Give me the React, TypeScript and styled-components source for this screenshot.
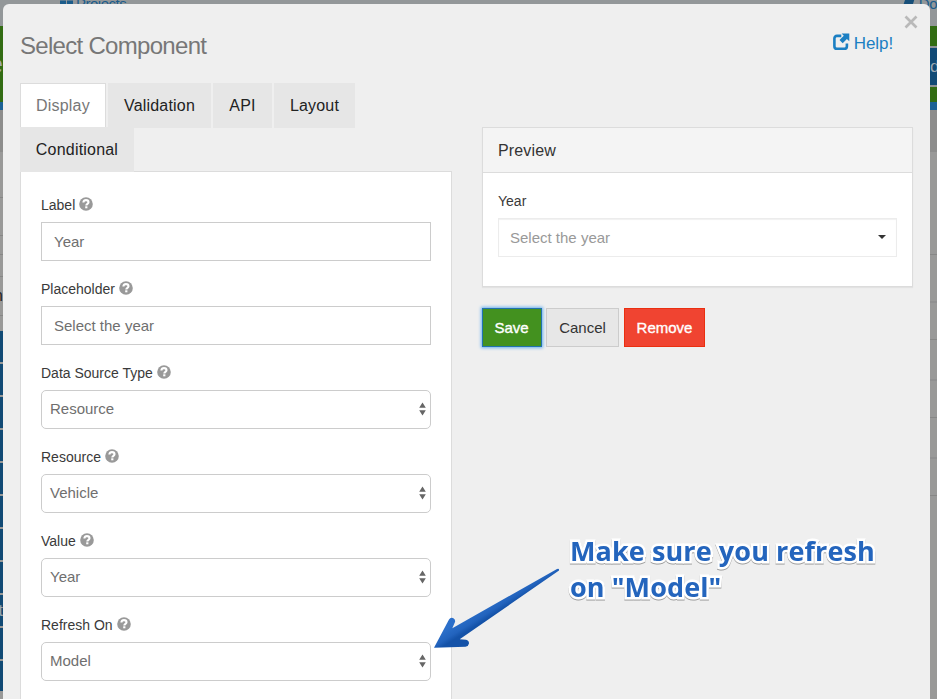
import React from 'react';
import styled, { createGlobalStyle, css } from 'styled-components';

const GlobalStyle = createGlobalStyle`
  *, *::before, *::after { box-sizing: border-box; }
  html, body { margin: 0; height: 100%; overflow: hidden; }
  body {
    background: #999998;
    color: #333;
    font-family: "Liberation Sans", Arial, sans-serif;
    font-size: 15px;
  }
  button, input { font-family: inherit; }
`;

const Screen = styled.div`
  position: relative;
  width: 937px;
  height: 699px;
  overflow: hidden;
`;

const Page = styled.div`
  display: flex;
  flex-direction: column;
  height: 699px;
`;

const NavBar = styled.nav`
  display: flex;
  justify-content: space-between;
  height: 26px;
  flex: none;
  padding: 0 0 0 60px;
  background: #939799;
`;

const NavItem = styled.span`
  display: flex;
  gap: 3px;
  height: 16px;
  margin-top: -6px;
  margin-right: -14px;
  font-size: 15px;
  line-height: 19px;
  letter-spacing: -0.5px;
  color: #1b5c8b;
  white-space: nowrap;
`;

const PageBody = styled.div`
  display: flex;
  justify-content: space-between;
  flex: 1;
`;

const Edge = styled.div<{ $side: 'left' | 'right' }>`
  display: flex;
  flex-direction: column;
  width: ${p => (p.$side === 'left' ? 3 : 7)}px;
`;

const Band = styled.div<{ $height: number; $color: string; $side: 'left' | 'right'; $size: number; $light: boolean }>`
  display: flex;
  flex: none;
  align-items: center;
  justify-content: ${p => (p.$side === 'left' ? 'flex-end' : 'flex-start')};
  height: ${p => p.$height}px;
  overflow: hidden;
  background: ${p => p.$color};
  color: ${p => (p.$light ? '#9aa7b0' : '#222')};
  font-size: ${p => p.$size}px;
`;

const Modal = styled.section`
  position: absolute;
  top: 4px;
  left: 3px;
  width: 927px;
  height: 720px;
  padding: 0 17px;
  background: #efefef;
  border-radius: 6px 6px 0 0;
`;

const ModalHeader = styled.header`
  display: flex;
  justify-content: space-between;
  height: 79px;
`;

const Title = styled.h3`
  margin: 27px 0 0;
  font-size: 24px;
  font-weight: 400;
  line-height: 30px;
  letter-spacing: -0.7px;
  color: #777;
`;

const HeaderActions = styled.div`
  display: flex;
  align-items: flex-start;
`;

const HelpLink = styled.a`
  display: flex;
  gap: 4px;
  margin-top: 29px;
  color: #1b7fc3;
  font-size: 17px;
  line-height: 21px;
  letter-spacing: -0.1px;
`;

const CloseButton = styled.button`
  display: flex;
  margin: 11px -5px 0 11px;
  padding: 0;
  border: 0;
  background: none;
`;

const Columns = styled.div`
  display: flex;
  justify-content: space-between;
`;

const FormColumn = styled.div`
  width: 432px;
`;

const Tabs = styled.div`
  display: flex;
  flex-wrap: wrap;
  align-content: flex-start;
  column-gap: 2px;
  height: 89px;
  padding-right: 60px;
  box-shadow: inset 0 -1px #dcdcdc;
`;

const Tab = styled.button<{ $active?: boolean; $width: number }>`
  width: ${p => p.$width}px;
  height: 44px;
  padding: 0;
  border: 0;
  background: #e6e6e6;
  color: #222;
  font-size: 16px;
  letter-spacing: 0.2px;
  line-height: 46px;
  box-shadow: 0 1px #e6e6e6;
  ${p =>
    p.$active &&
    css`
      border: 1px solid #dcdcdc;
      border-bottom: 0;
      background: #fff;
      color: #777;
      line-height: 43px;
      box-shadow: none;
    `}
`;

const FormPanel = styled.div`
  display: flex;
  flex-direction: column;
  height: 560px;
  padding: 23px 20px 0;
  border: 1px solid #dcdcdc;
  border-top: 0;
  background: #fff;
`;

const Field = styled.div`
  height: 84px;
`;

const Label = styled.label`
  display: flex;
  align-items: center;
  gap: 4px;
  height: 20px;
  margin-bottom: 7px;
  font-size: 14px;
  color: #3a3a3a;

  svg { margin-top: -2px; }
`;

const controlBox = css`
  display: flex;
  align-items: center;
  width: 100%;
  height: 39px;
  border: 1px solid #ccc;
  background: #fff;
  color: #6f6f6f;
  font-size: 15px;
  line-height: 20px;
`;

const TextBox = styled.div`
  ${controlBox}
  padding-left: 12px;
`;

const SelectBox = styled.div`
  ${controlBox}
  justify-content: space-between;
  padding: 0 4px 0 8px;
  border-radius: 5px;

  span { margin-top: -2px; }
  svg { margin-top: -1px; }
`;

const PreviewColumn = styled.div`
  width: 431px;
  margin: 44px 0 0;
`;

const PreviewPanel = styled.div`
  height: 160px;
  border: 1px solid #dcdcdc;
  background: #fff;
  box-shadow: 0 1px 1px rgba(0, 0, 0, 0.05);
`;

const PreviewHeading = styled.div`
  height: 45px;
  padding-left: 15px;
  border-bottom: 1px solid #dcdcdc;
  background: #f4f4f4;
  font-size: 16px;
  letter-spacing: 0.15px;
  line-height: 45px;
`;

const PreviewBody = styled.div`
  padding: 18px 15px 0;
`;

const PreviewSelect = styled.div`
  ${controlBox}
  justify-content: space-between;
  padding: 0 10px 0 11px;
  border-color: #ececec;
  box-shadow: inset 0 1px 1px rgba(0, 0, 0, 0.06);
  color: #999;

  svg { margin-top: -1px; }
`;

const ButtonRow = styled.div`
  display: flex;
  margin-top: 21px;
`;

const tones = {
  save: css`
    width: 60px;
    margin-right: 4px;
    padding-right: 1px;
    border-color: #2173ae;
    background: #43911f;
    color: #fff;
    box-shadow: 0 0 3px 1px #6bb1f0;
  `,
  cancel: css`
    width: 73px;
    margin-right: 5px;
    border-color: #ccc;
    background: #e7e7e7;
    color: #333;
  `,
  remove: css`
    width: 81px;
    border-color: #ea2f10;
    background: #f04431;
    color: #fff;
  `,
};

const Button = styled.button<{ $tone: keyof typeof tones }>`
  height: 39px;
  padding: 0;
  border: 1px solid;
  font-size: 15px;
  line-height: 37px;
  ${p => p.$tone !== 'cancel' && '-webkit-text-stroke: 0.35px #fff;'}
  ${p => tones[p.$tone]}
`;

const Callout = styled.p`
  position: absolute;
  top: 533px;
  left: 570px;
  margin: 0;
  font-family: "Open Sans", "Noto Sans", sans-serif;
  font-size: 27px;
  font-weight: 700;
  line-height: 36px;
  letter-spacing: 0.1px;
  white-space: pre;
  color: #2465bd;
  -webkit-text-stroke: 5px #fff;
  paint-order: stroke fill;
  stroke-linejoin: round;
  filter: drop-shadow(0 1px 0.5px rgba(0, 0, 0, 0.35));
`;

const ArrowLayer = styled.svg`
  position: absolute;
  top: 560px;
  left: 425px;
`;

const QuestionIcon = () => (
  <svg width="14" height="14" viewBox="0 0 14 14" aria-hidden="true">
    <circle cx="7" cy="7" r="6.8" fill="#999" />
    <path d="M4.4 5.5C4.4 3.7 5.500 3.100 7 3.100s2.500.8 2.500 2.100C9.500 6.900 7.300 6.700 7.300 8.500" fill="none" stroke="#fff" strokeWidth="2.100" />
    <rect x="6.200" y="9.300" width="2.200" height="2" fill="#fff" />
  </svg>
);

const ExternalIcon = () => (
  <svg width="17" height="18" viewBox="0 0 17 18" aria-hidden="true">
    <path d="M8.300 2.900H4Q1.400 2.900 1.400 5.500v7.700Q1.400 15.800 4 15.800h7.300q2.600 0 2.600-2.600v-2.800" fill="none" stroke="#1b7fc3" strokeWidth="2.600" />
    <path d="M8.600 0.500h7.700v7.700l-2.400-2.200-4.200 4.200-3.200-3.200 4.300-4.200z" fill="#1b7fc3" />
  </svg>
);

const CloseIcon = () => (
  <svg width="14" height="14" viewBox="0 0 14 14" aria-hidden="true">
    <path d="M1.500 1.500l11 11M12.500 1.500l-11 11" stroke="#b9b9b9" strokeWidth="2.700" />
  </svg>
);

const Stepper = () => (
  <svg width="7" height="14" viewBox="0 0 7 14" aria-hidden="true">
    <path d="M3.500 0.500L6.800 5.800H.2zM.2 8.300h6.600L3.500 13.600z" fill="#666" />
  </svg>
);

const Caret = () => (
  <svg width="8" height="4" viewBox="0 0 8 4" aria-hidden="true">
    <path d="M0 0h8L4 4z" fill="#333" />
  </svg>
);

const GridIcon = () => (
  <svg width="13" height="12" viewBox="0 0 13 12" aria-hidden="true">
    <path d="M0 0h6v5.500H0zM7 0h6v5.500H7zM0 6.500h6V10H0zM7 6.500h6V10H7z" fill="#1b5c8b" />
  </svg>
);

const BookIcon = () => (
  <svg width="13" height="12" viewBox="0 0 13 12" aria-hidden="true">
    <path d="M4 0h9l-3 10H2v1h8v1H0z" fill="#174f79" />
  </svg>
);

const NAVY = '#114a75';
const GREY = '#999998';
const LINE = '#878786';

type BandSpec = [height: number, color: string, text?: string, size?: number];

const leftBands: BandSpec[] = [
  [76, '#326c13', 'e', 26],
  [8, '#1c6195'],
  [42, '#8d8d8c'],
  [45, GREY], [1, LINE],
  [37, GREY], [1, LINE],
  [18, GREY], [1, LINE],
  [21, GREY], [1, LINE],
  [38, GREY, 'n'], [1, LINE],
  [15, GREY],
  [31, NAVY],
  ...Array.from({ length: 9 }, (_, i): BandSpec[] => [[2, GREY], [31, NAVY, i === 7 ? 't' : undefined]]).flat(),
  [2, GREY], [30, NAVY],
];

const rightBands: BandSpec[] = [
  [20, '#326c13'], [2, '#8d9296'],
  [37, NAVY, 'd', 17], [2, '#8d9296'],
  [15, '#326c13'],
  [8, '#1c6195'],
  [42, '#8d8d8c'],
  [102, GREY], [1, LINE],
  [46, GREY], [2, '#909090'],
  [36, GREY], [1, LINE],
  [39, GREY], [2, '#909090'],
  [36, GREY], [1, LINE],
  [39, GREY], [2, '#909090'],
  [36, GREY], [1, LINE],
];

const Bands = ({ bands, side }: { bands: BandSpec[]; side: 'left' | 'right' }) => (
  <Edge $side={side}>
    {bands.map(([height, color, text, size = 16], i) => (
      <Band key={i} $height={height} $color={color} $light={text !== 'n'} $side={side} $size={size}>
        {text}
      </Band>
    ))}
  </Edge>
);

const fields = [
  { label: 'Label', value: 'Year' },
  { label: 'Placeholder', value: 'Select the year' },
  { label: 'Data Source Type', value: 'Resource', select: true },
  { label: 'Resource', value: 'Vehicle', select: true },
  { label: 'Value', value: 'Year', select: true },
  { label: 'Refresh On', value: 'Model', select: true },
];

export default function App() {
  return (
    <Screen>
      <GlobalStyle />
      <Page>
        <NavBar>
          <NavItem><GridIcon />Projects</NavItem>
          <NavItem><BookIcon />Docs</NavItem>
        </NavBar>
        <PageBody>
          <Bands bands={leftBands} side="left" />
          <Bands bands={rightBands} side="right" />
        </PageBody>
      </Page>

      <Modal>
        <ModalHeader>
          <Title>Select Component</Title>
          <HeaderActions>
            <HelpLink><ExternalIcon />Help!</HelpLink>
            <CloseButton aria-label="Close"><CloseIcon /></CloseButton>
          </HeaderActions>
        </ModalHeader>
        <Columns>
          <FormColumn>
            <Tabs>
              <Tab $active $width={86}>Display</Tab>
              <Tab $width={103}>Validation</Tab>
              <Tab $width={59}>API</Tab>
              <Tab $width={81}>Layout</Tab>
              <Tab $width={114}>Conditional</Tab>
            </Tabs>
            <FormPanel>
              {fields.map(f => (
                <Field key={f.label}>
                  <Label>{f.label}<QuestionIcon /></Label>
                  {f.select ? (
                    <SelectBox><span>{f.value}</span><Stepper /></SelectBox>
                  ) : (
                    <TextBox>{f.value}</TextBox>
                  )}
                </Field>
              ))}
            </FormPanel>
          </FormColumn>
          <PreviewColumn>
            <PreviewPanel>
              <PreviewHeading>Preview</PreviewHeading>
              <PreviewBody>
                <Label>Year</Label>
                <PreviewSelect>Select the year<Caret /></PreviewSelect>
              </PreviewBody>
            </PreviewPanel>
            <ButtonRow>
              <Button $tone="save">Save</Button>
              <Button $tone="cancel">Cancel</Button>
              <Button $tone="remove">Remove</Button>
            </ButtonRow>
          </PreviewColumn>
        </Columns>
      </Modal>

      <ArrowLayer width="140" height="95" viewBox="425 560 140 95" aria-hidden="true">
        <defs>
          <linearGradient id="arrow" gradientUnits="userSpaceOnUse" x1="486" y1="604" x2="496" y2="620">
            <stop offset="0" stopColor="#2b6fca" />
            <stop offset="0.45" stopColor="#2263bd" />
            <stop offset="0.7" stopColor="#1452a8" />
          </linearGradient>
        </defs>
        <path
          d="M434 647.700L449 619.500Q450.500 617 453 618Q455.700 619.300 455 622L452.300 628.300L557 569Q559.500 568.300 559 570.500L459.700 639.300L466 639.800Q469 640.500 469 643.500Q468.500 646.300 465.500 646.800Z"
          fill="url(#arrow)"
        />
      </ArrowLayer>
      <Callout>{'Make sure you refresh\non "Model"'}</Callout>
    </Screen>
  );
}
